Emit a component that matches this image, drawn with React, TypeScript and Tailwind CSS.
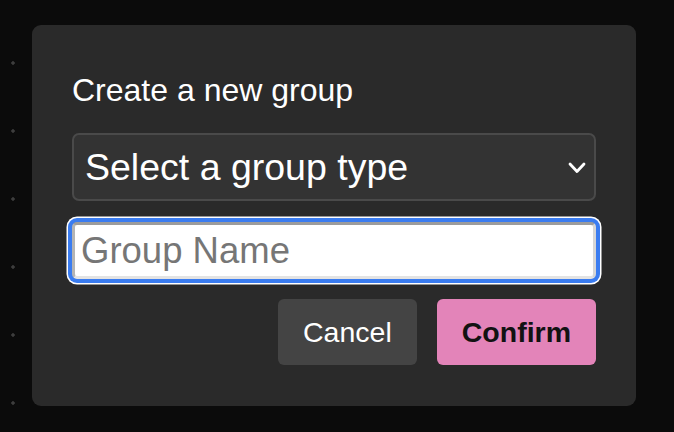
export default function App() {
  return (
    <div className="min-h-screen bg-[#0b0b0b] bg-[radial-gradient(circle,#3d3d3d_1.5px,transparent_1.8px)] bg-[size:68px_68px] bg-[position:-21px_29px] pl-[32px] pt-[25px] font-['Liberation_Sans',Arial,sans-serif]">
      <div className="w-[604px] rounded-[9px] bg-[#2a2a2a] px-[40px] pb-[41px] pt-[49px]">
        <h2 className="text-[32px] leading-none text-white">Create a new group</h2>

        <div className="relative mt-[27px]">
          <select
            defaultValue=""
            className="h-[68px] w-full appearance-none rounded-[7px] border-2 border-[#4a4a4a] bg-[#333333] pl-[11px] pr-[40px] text-[37.5px] text-white outline-none"
          >
            <option value="" disabled>
              Select a group type
            </option>
            <option value="team">Team</option>
            <option value="project">Project</option>
          </select>
          {/* chevron */}
          <svg
            className="pointer-events-none absolute right-[10px] top-[29px]"
            width="18"
            height="12"
            viewBox="0 0 18 12"
            fill="none"
          >
            <polyline
              points="2,2 9,9.5 16,2"
              stroke="white"
              strokeWidth="2.8"
              strokeLinecap="round"
              strokeLinejoin="round"
            />
          </svg>
        </div>

        <input
          placeholder="Group Name"
          className="mt-[21px] h-[57px] w-full rounded-[5px] border-[3px] border-t-[#9c9c9c] border-l-[#b4b4b4] border-r-[#d6d6d6] border-b-[#e3e3e3] bg-white px-[6px] text-[36.5px] text-black outline-none shadow-[0_0_0_4px_#3a7cf0,0_0_0_5.5px_#ffffff] placeholder:text-[#767676]"
        />

        <div className="mt-[20px] flex justify-end gap-[20px]">
          <button className="h-[66px] rounded-[6px] bg-[#444444] px-[25px] text-[28.5px] text-white">
            Cancel
          </button>
          <button className="h-[66px] rounded-[6px] bg-[#e384b9] px-[25px] text-[28.5px] font-bold text-[#121212]">
            Confirm
          </button>
        </div>
      </div>
    </div>
  );
}
